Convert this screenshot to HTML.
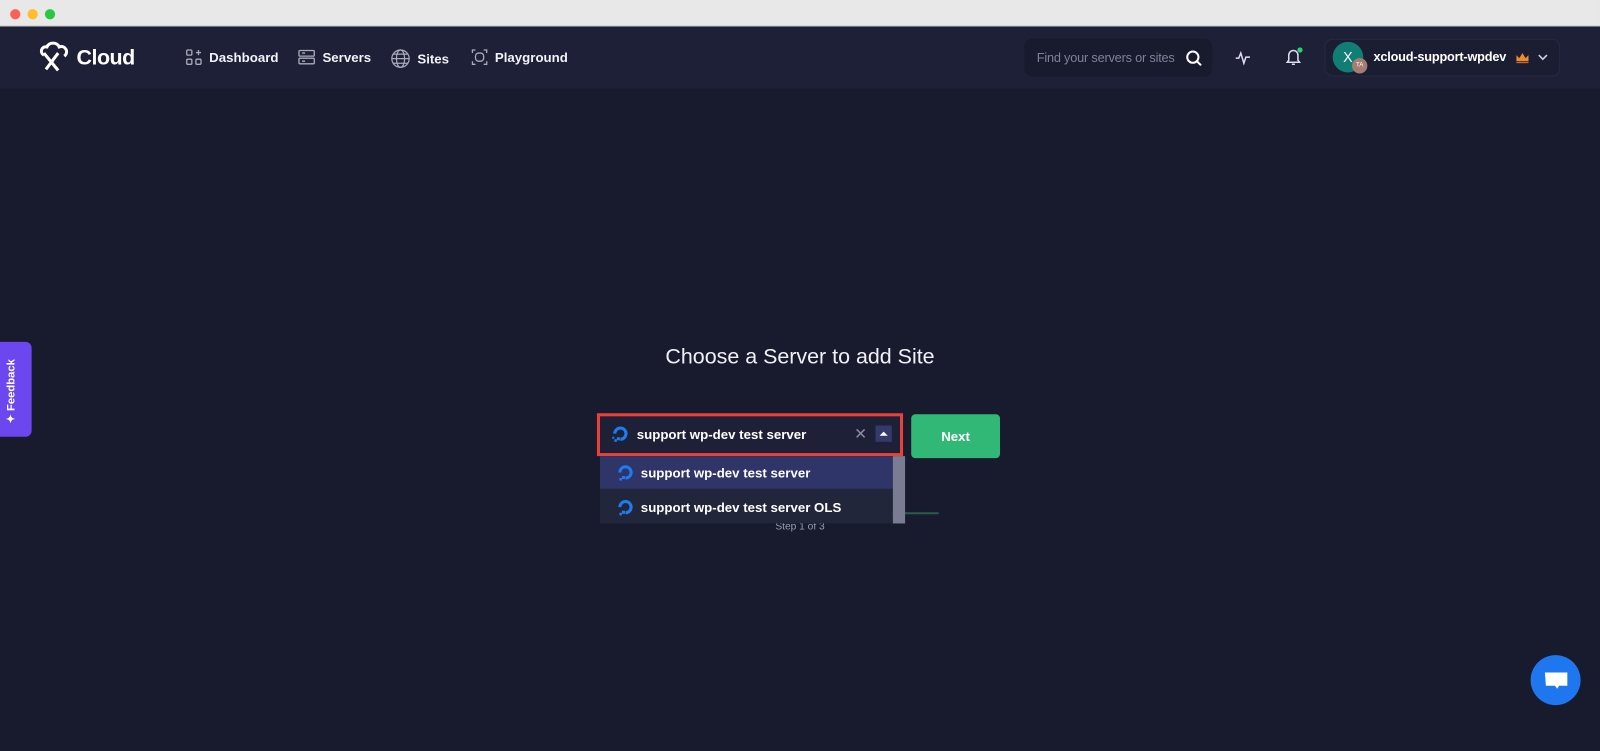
<!DOCTYPE html>
<html><head><meta charset="utf-8"><style>
*{box-sizing:border-box;margin:0;padding:0}
body{width:1600px;height:751px;overflow:hidden;background:#181a2e;font-family:"Liberation Sans",sans-serif;color:#fff;position:relative}
#w{position:absolute;left:0;top:0;width:1568px;height:736px;transform:scale(1.0204);transform-origin:0 0}
.tb{position:absolute;left:0;top:0;width:1568px;height:26px;background:#e8e8e8;border-bottom:1px solid #c8c8c8}
.dot{position:absolute;top:9px;width:10px;height:10px;border-radius:50%}
.nav{position:absolute;top:26px;left:0;width:1568px;height:61px;background:#1d2036}
.ni{position:absolute;top:22px;font-size:13px;font-weight:bold;display:flex;align-items:center;gap:7px;color:#f2f3f7}
.abs{position:absolute}
</style></head><body><div id="w">
<div class="tb"><div class="dot" style="left:10px;background:#fe5f57"></div><div class="dot" style="left:27px;background:#febc2e"></div><div class="dot" style="left:44px;background:#28c840"></div></div>
<div class="nav">
 <svg class="abs" style="left:37px;top:14px" width="36" height="32" viewBox="0 0 36 32" fill="none" stroke="#fff" stroke-width="3"><path d="M6 14C2 12 3 5 9 6 11 1 19 1 21 6 27 4 31 11 26 15"/><path d="M6 12l14 17M20 12L8 28"/></svg>
 <div class="abs" style="left:75px;top:19px;font-size:21px;font-weight:bold;letter-spacing:-0.5px">Cloud</div>
 <div class="ni" style="left:182px"><svg width="16" height="16" viewBox="0 0 16 16" fill="none" stroke="#aab" stroke-width="1.3"><rect x="1" y="1" width="5" height="5" rx="1"/><rect x="1" y="10" width="5" height="5" rx="1"/><rect x="10" y="10" width="5" height="5" rx="1"/><path d="M12.5 1v5M10 3.5h5"/></svg>Dashboard</div>
 <div class="ni" style="left:292px"><svg width="17" height="16" viewBox="0 0 17 16" fill="none" stroke="#aab" stroke-width="1.3"><rect x="1" y="1.5" width="15" height="5.5" rx="1"/><rect x="1" y="9" width="15" height="5.5" rx="1"/><path d="M4 4h3M4 12h3"/></svg>Servers</div>
 <div class="ni" style="left:383px"><svg width="19" height="19" viewBox="0 0 19 19" fill="none" stroke="#aab" stroke-width="1.2"><circle cx="9.5" cy="9.5" r="8.5"/><ellipse cx="9.5" cy="9.5" rx="4" ry="8.5"/><path d="M1 9.5h17M2.5 5h14M2.5 14h14"/></svg>Sites</div>
 <div class="ni" style="left:462px"><svg width="16" height="16" viewBox="0 0 16 16" fill="none" stroke="#aab" stroke-width="1.3"><path d="M1 4V1h3M12 1h3v3M15 12v3h-3M4 15H1v-3"/><rect x="4" y="4" width="8" height="8" rx="3"/></svg>Playground</div>
 <div class="abs" style="left:1004px;top:12px;width:184px;height:37px;background:#181a2e;border-radius:8px"><span class="abs" style="left:12px;top:12px;font-size:12.5px;color:#7e8299;letter-spacing:-0.2px">Find your servers or sites</span><svg class="abs" style="left:158px;top:11px" width="16" height="16" viewBox="0 0 16 16" fill="none" stroke="#fff" stroke-width="2"><circle cx="7" cy="7" r="5.5"/><path d="M11 11l4 4"/></svg></div>
 <svg class="abs" style="left:1210px;top:22px" width="16" height="16" viewBox="0 0 16 16" fill="none" stroke="#dde" stroke-width="1.5"><path d="M1 9h3l2-5 3 10 2-6h4"/></svg>
 <svg class="abs" style="left:1259px;top:20px" width="18" height="19" viewBox="0 0 18 19" fill="none" stroke="#dde" stroke-width="1.5"><path d="M4 13V8a4.5 4.5 0 019 0v5l1.5 2h-12z M7 17h3"/><circle cx="15" cy="3" r="2.6" fill="#2ecc71" stroke="none"/></svg>
 <div class="abs" style="left:1298px;top:12px;width:231px;height:37px;border:1px solid #262a42;border-radius:8px;background:#1b1e33"></div>
 <div class="abs" style="left:1306px;top:15px;width:30px;height:30px;border-radius:50%;background:#127d75;font-size:14px;text-align:center;line-height:30px">X</div>
 <div class="abs" style="left:1325px;top:31px;width:15px;height:15px;border-radius:50%;background:#a57e72;font-size:6px;text-align:center;line-height:15px">TA</div>
 <div class="abs" style="left:1346px;top:23px;font-size:12.5px;font-weight:bold;letter-spacing:-0.2px">xcloud-support-wpdev</div>
 <svg class="abs" style="left:1486px;top:26px" width="12" height="10" viewBox="0 0 12 10"><path d="M0 2l3 3 3-5 3 5 3-3v6H0z M0 9h12v1H0z" fill="#f2892d"/></svg>
 <svg class="abs" style="left:1507px;top:27px" width="10" height="7" viewBox="0 0 10 7" fill="none" stroke="#ccd" stroke-width="1.6"><path d="M1 1l4 4 4-4"/></svg>
</div>
<div class="abs" style="left:0;top:335px;width:31px;height:93px;background:#6c47f0;border-radius:0 6px 6px 0"><div class="abs" style="left:4px;top:80px;transform:rotate(-90deg);transform-origin:0 0;font-size:11px;font-weight:bold;white-space:nowrap;width:80px">✦ Feedback</div></div>
<div class="abs" style="left:0;top:338px;width:1568px;text-align:center;font-size:21px;color:#f0f1f5">Choose a Server to add Site</div>
<div class="abs" style="left:760px;top:502px;width:160px;height:2px;background:#2a5c4b"></div>
<div class="abs" style="left:0;top:511px;width:1568px;text-align:center;font-size:10px;color:#9a9db0">Step 1 of 3</div>
<div class="abs" style="left:585px;top:405px;width:300px;height:42px;border:3px solid #e8413a;background:#1d2036"></div>
<svg class="abs" style="left:598px;top:415px" width="20" height="20" viewBox="0 0 20 20"><path d="M10 17a7 7 0 10-7-7h3a4 4 0 114 4z" fill="#1f7bf0"/><rect x="6.5" y="13.5" width="3" height="3" fill="#1f7bf0"/><rect x="4" y="15.5" width="2.5" height="2.5" fill="#1f7bf0"/><rect x="2" y="13" width="2" height="2" fill="#1f7bf0"/></svg>
<div class="abs" style="left:624px;top:418px;font-size:13px;font-weight:bold">support wp-dev test server</div>
<div class="abs" style="left:837px;top:416px;font-size:15px;color:#8a8da0">✕</div>
<div class="abs" style="left:858px;top:417px;width:16px;height:16px;background:#353a6b"><svg width="16" height="16" viewBox="0 0 16 16"><path d="M4 10l4-4 4 4z" fill="#fff"/></svg></div>
<div class="abs" style="left:893px;top:406px;width:87px;height:43px;background:#31b877;border-radius:4px;text-align:center;line-height:43px;font-size:13px;font-weight:bold">Next</div>
<div class="abs" style="left:588px;top:447px;width:287px;height:66px;background:#22263b"></div>
<div class="abs" style="left:588px;top:447px;width:287px;height:32px;background:#2f3469"></div>
<div class="abs" style="left:875px;top:447px;width:12px;height:66px;background:#7a7c94"></div>
<svg class="abs" style="left:603px;top:453px" width="20" height="20" viewBox="0 0 20 20"><path d="M10 17a7 7 0 10-7-7h3a4 4 0 114 4z" fill="#1f7bf0"/><rect x="6.5" y="13.5" width="3" height="3" fill="#1f7bf0"/><rect x="4" y="15.5" width="2.5" height="2.5" fill="#1f7bf0"/></svg>
<div class="abs" style="left:628px;top:456px;font-size:13px;font-weight:bold">support wp-dev test server</div>
<svg class="abs" style="left:603px;top:487px" width="20" height="20" viewBox="0 0 20 20"><path d="M10 17a7 7 0 10-7-7h3a4 4 0 114 4z" fill="#1f7bf0"/><rect x="6.5" y="13.5" width="3" height="3" fill="#1f7bf0"/><rect x="4" y="15.5" width="2.5" height="2.5" fill="#1f7bf0"/></svg>
<div class="abs" style="left:628px;top:490px;font-size:13px;font-weight:bold">support wp-dev test server OLS</div>
<div class="abs" style="left:1500px;top:642px;width:49px;height:49px;border-radius:50%;background:#1f77f0"><svg class="abs" style="left:13px;top:15px" width="24" height="20" viewBox="0 0 24 20"><path d="M1 2h22v13H15l-2 3-2-3H2z" fill="#fff"/></svg></div>
</div></body></html>
